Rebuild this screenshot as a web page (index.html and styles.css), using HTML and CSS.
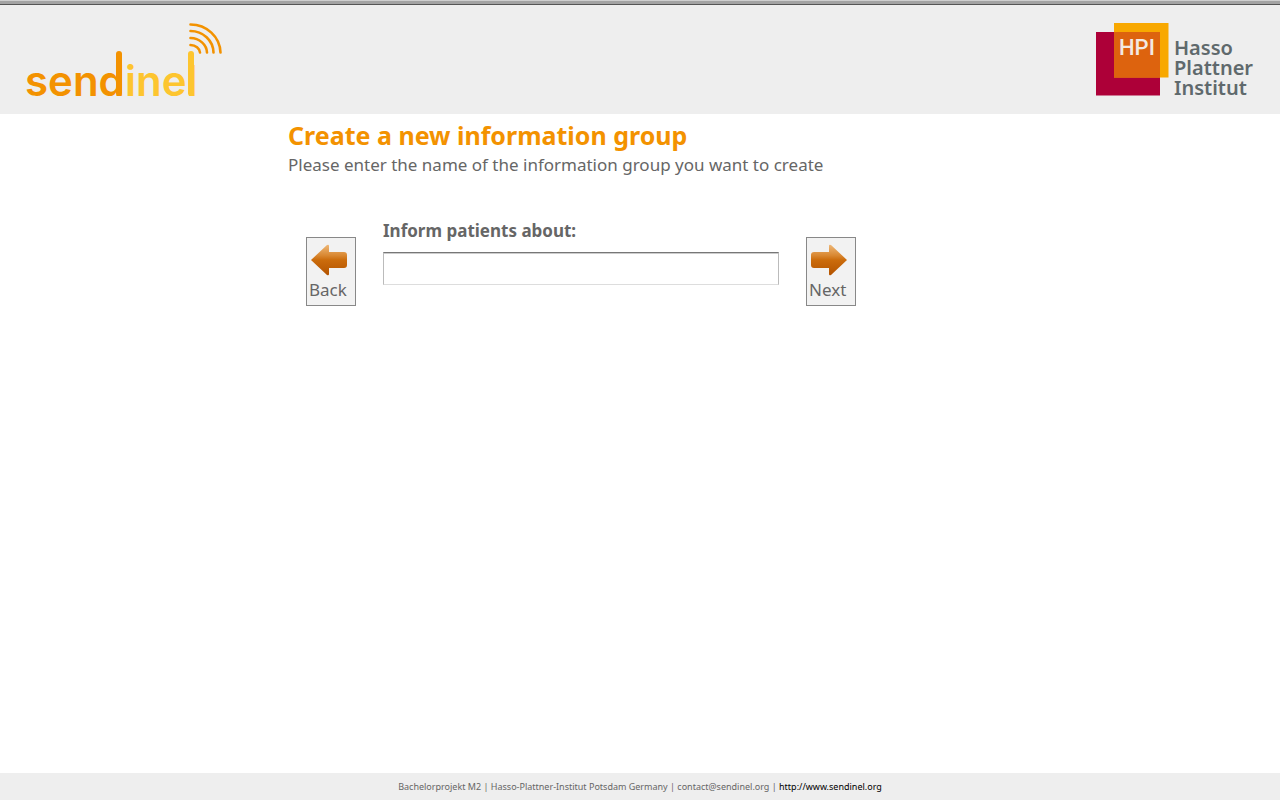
FILE: index.html
```html
<!DOCTYPE html>
<html lang="en">
<head>
<meta charset="utf-8">
<title>Sendinel</title>
<link rel="stylesheet" href="styles.css">
</head>
<body>
<header class="site-header">
  <a class="logo" href="#" aria-label="sendinel">
    <svg width="200" height="90" viewBox="0 0 200 90">
      <g class="word">
        <text class="word-dark" x="0" y="73">send</text>
        <text class="word-light" x="100" y="73">inel</text>
      </g>
      <path d="M94 31V70" stroke="#f39200" stroke-width="6" stroke-linecap="round"/>
      <path d="M166 31V70" stroke="#fdc52f" stroke-width="6" stroke-linecap="round"/>
      <g fill="none" stroke="#f39200" stroke-width="2.600" stroke-linecap="round">
        <path d="M165.500 1.500A30 29 0 0 1 195.500 29.500"/>
        <path d="M165.500 8A23 22 0 0 1 188.500 29.500"/>
        <path d="M165.500 15A17 15 0 0 1 182 29.500"/>
        <path d="M165.500 22A10 8 0 0 1 175 29.500"/>
      </g>
    </svg>
  </a>
  <a class="hpi" href="#" aria-label="Hasso Plattner Institut">
    <svg width="158" height="90" viewBox="0 0 158 90">
      <rect y="9" width="64" height="63.500" fill="#ad0038"/>
      <rect x="18" width="54.500" height="54.500" fill="#f8a800"/>
      <rect x="18" y="9" width="46" height="45.500" fill="#dd630e"/>
      <text class="hpi-mark" x="23" y="32">HPI</text>
      <g class="hpi-name">
        <text x="78" y="32">Hasso</text>
        <text x="78" y="52">Plattner</text>
        <text x="78" y="72">Institut</text>
      </g>
    </svg>
  </a>
</header>
<main class="content">
  <h1>Create a new information group</h1>
  <p class="intro">Please enter the name of the information group you want to create</p>
  <form class="step">
    <button class="nav" type="button">
      <svg width="38" height="32" viewBox="0 0 38 32">
        <defs><linearGradient id="orange" x1="0" y1="0" x2="0" y2="1">
          <stop offset="0" stop-color="#eeb878"/><stop offset=".35" stop-color="#d98832"/>
          <stop offset=".5" stop-color="#cb6c0c"/><stop offset="1" stop-color="#b35300"/>
        </linearGradient></defs>
        <path d="M1 16 17 1Q19 0 19 2V8H34Q37 8 37 11V21Q37 24 34 24H19V30Q19 32 17 31Z" fill="url(#orange)"/>
      </svg>
      <span>Back</span>
    </button>
    <div class="field">
      <label for="group">Inform patients about:</label>
      <input id="group" type="text">
    </div>
    <button class="nav" type="button">
      <svg width="38" height="32" viewBox="0 0 38 32">
        <path d="M37 16 21 1Q19 0 19 2V8H4Q1 8 1 11V21Q1 24 4 24H19V30Q19 32 21 31Z" fill="url(#orange)"/>
      </svg>
      <span>Next</span>
    </button>
  </form>
</main>
<footer class="site-footer">Bachelorprojekt M2 | Hasso-Plattner-Institut Potsdam Germany | contact@sendinel.org | <a href="http://www.sendinel.org">http://www.sendinel.org</a></footer>
</body>
</html>
```
FILE: styles.css
```css
* { box-sizing: border-box; }
body {
  margin: 0;
  min-height: 100vh;
  display: flex;
  flex-direction: column;
  background: #fff;
  color: #666;
  font-family: "Lucida Grande", "Noto Sans", sans-serif;
}
body::before {
  content: "";
  height: 5px;
  background: linear-gradient(#cfcfcf 1px, #a3a3a3 1px, #a3a3a3 4px, #555 4px);
}
.site-header {
  display: flex;
  justify-content: space-between;
  align-items: flex-start;
  padding: 18px 26px 1px 25px;
  background: #eee;
}
.site-header svg { display: block; }
.word { font: 600 42px "Inter", sans-serif; }
.word-dark { fill: #f39200; }
.word-light { fill: #fdc52f; }
.hpi-mark { font: 500 22px "Roboto", sans-serif; fill: #f3e9e2; }
.hpi-name { font: 600 20px/20px "Noto Sans", sans-serif; fill: #5f696c; }
.content {
  flex: 1;
  width: 100%;
  max-width: 704px;
  margin: 0 auto;
}
h1 {
  margin: 0;
  padding-top: 4px;
  color: #f39200;
  font-size: 25px;
  line-height: 34px;
}
.intro {
  margin: 0;
  padding-top: 1px;
  font-size: 17px;
  line-height: 24px;
}
.step {
  display: flex;
  align-items: flex-start;
  gap: 27px;
  max-width: 586px;
  padding: 42px 18px 0;
}
.nav {
  width: 50px;
  height: 69px;
  flex: none;
  margin-top: 18px;
  padding: 6px 2px 0;
  display: flex;
  flex-direction: column;
  align-items: flex-start;
  gap: 2px;
  border: 1px solid #888;
  background: #f2f2f2;
  color: #666;
  font: 17px/24px "Lucida Grande", "Noto Sans", sans-serif;
}
.nav svg { margin-left: 1px; }
.field { flex: 1; }
.field label {
  display: block;
  font-size: 17px;
  font-weight: 700;
  line-height: 24px;
}
.field input {
  display: block;
  width: 100%;
  height: 33px;
  margin-top: 9px;
  padding: 4px;
  border: 1px solid #bbb;
  border-top-color: #777;
  border-bottom-color: #ddd;
  box-shadow: inset 0 1px #ccc;
  background: #fff;
  font: inherit;
}
.site-footer {
  background: #eee;
  text-align: center;
  font-size: 9px;
  line-height: 27px;
}
.site-footer a { color: #000; text-decoration: none; }
```
